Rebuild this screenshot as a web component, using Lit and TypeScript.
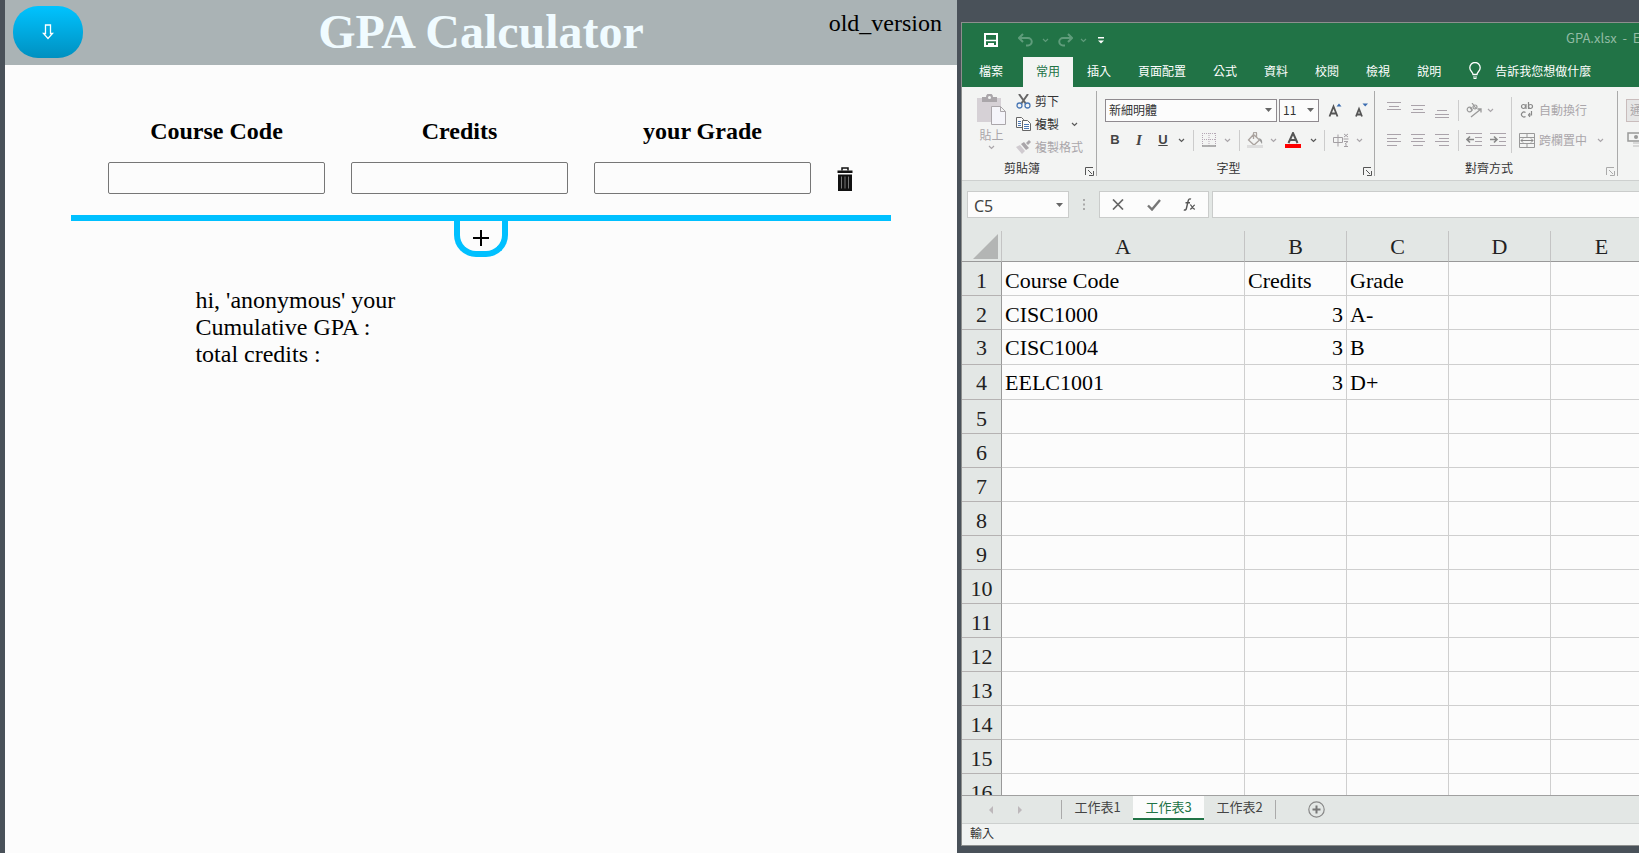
import { LitElement, html, svg, css, nothing, TemplateResult } from "lit";
import { customElement, state } from "lit/decorators.js";

/* ---------- shared icon helpers ---------- */

const icon = (w: number, h: number, body: TemplateResult) =>
  html`<svg width=${w} height=${h} viewBox="0 0 ${w} ${h}" fill="none" aria-hidden="true">${body}</svg>`;

const caret = (color = "#5a5a5a") =>
  icon(7, 5, svg`<path d="M1 1l2.5 2.5L6 1" stroke=${color} stroke-width="1.2"/>`);

const solidCaret = () => icon(7, 4, svg`<path d="M0 0h7L3.5 4z" fill="#666"/>`);

const lines = (ys: number[], xs: [number, number][], color = "#aaa3aa") =>
  icon(
    16,
    16,
    svg`<path d=${ys.map((y, i) => `M${xs[i][0]} ${y}.5H${xs[i][1]}`).join("")} stroke=${color}/>`
  );

const launcher = (color = "#555") =>
  icon(9, 9, svg`<path d="M8 .5H.5V8M3 3l4 4M8.500 4v4.500H4" stroke=${color}/>`);

/* ---------- GPA calculator page ---------- */

@customElement("gpa-calculator")
export class GpaCalculator extends LitElement {
  @state() private rows = 1;

  static styles = css`
    :host {
      display: block;
      background: #fcfcfc;
      color: #000;
      font: 24px/27px "Liberation Serif", serif;
      overflow: hidden;
    }
    .top {
      display: grid;
      grid-template-columns: 1fr auto 1fr;
      height: 65px;
      box-sizing: border-box;
      padding: 6px 8px 0;
      background: #aab3b5;
    }
    .download {
      width: 70px;
      height: 52px;
      border: 0;
      border-radius: 25px;
      padding: 0;
      color: #fff;
      background: linear-gradient(#00c3ff, #0090c0);
      display: grid;
      place-items: center;
    }
    h1 {
      margin: 0;
      font-size: 48px;
      line-height: 52px;
      color: #f0fbff;
    }
    .old {
      justify-self: end;
      align-self: start;
      margin: 4px 7px 0 0;
      color: #000;
      text-decoration: none;
    }
    .sheet {
      margin: 53px 66px 0;
    }
    .grid {
      display: grid;
      grid-template-columns: 1fr 1fr 1fr 16px;
      column-gap: 26px;
      row-gap: 17px;
      padding: 0 38px 21px 37px;
      align-items: center;
      border-bottom: 6px solid #00c0ff;
    }
    .grid label {
      text-align: center;
      font-weight: bold;
    }
    .grid input {
      box-sizing: border-box;
      width: 100%;
      min-width: 0;
      height: 32px;
      border: 1px solid #767676;
      border-radius: 2px;
      background: #fcfcfc;
      font: inherit;
    }
    .trash {
      border: 0;
      padding: 2px 0 0;
      background: none;
      display: flex;
    }
    .add {
      display: grid;
      place-items: center;
      margin: 0 auto;
      box-sizing: border-box;
      width: 54px;
      height: 36px;
      padding: 4px 0 0;
      border: 6px solid #00c0ff;
      border-top: 0;
      border-radius: 0 0 22px 22px;
      background: none;
    }
    .result {
      margin: 30px 0 0 20%;
      width: 220px;
    }
    .result p {
      margin: 0;
    }
  `;

  private trash() {
    return icon(
      16,
      24,
      svg`<path d="M5 3.500V1h6v2.500" stroke="#111" stroke-width="1.500"/>
        <path d="M.5 3.500h15V6H.5zM1 7.500h14V24H1z" fill="#111"/>
        <path d="M4.500 9.500v12M8 9.500v12M11.500 9.500v12" stroke="#777"/>`
    );
  }

  render() {
    const names = ["Course Code", "Credits", "your Grade"];
    return html`
      <header class="top">
        <button class="download" aria-label="Download">
          ${icon(12, 16, svg`<path d="M3.500 1h5v8.500h2L6 14.500 1.500 9.500h2z" stroke="#fff" stroke-width="1.300"/>`)}
        </button>
        <h1>GPA Calculator</h1>
        <a class="old" href="#old">old_version</a>
      </header>
      <main>
        <section class="sheet">
          <div class="grid">
            ${names.map((n, i) => html`<label for="f0-${i}">${n}</label>`)}
            <span></span>
            ${Array.from({ length: this.rows }).map(
              (_, r) => html`
                ${names.map((n, i) => html`<input id="f${r}-${i}" type="text" />`)}
                <button class="trash" aria-label="Delete row" @click=${() => (this.rows = Math.max(1, this.rows - 1))}>
                  ${this.trash()}
                </button>
              `
            )}
          </div>
          <button class="add" aria-label="Add row" @click=${() => this.rows++}>
            ${icon(16, 16, svg`<path d="M0 8h16M8 0v16" stroke="#000" stroke-width="2"/>`)}
          </button>
        </section>
        <section class="result">
          <p>hi, 'anonymous' your</p>
          <p>Cumulative GPA :</p>
          <p>total credits :</p>
        </section>
      </main>
    `;
  }
}

/* ---------- spreadsheet window ---------- */

const CELLS: Record<number, [string, string, string]> = {
  1: ["Course Code", "Credits", "Grade"],
  2: ["CISC1000", "3", "A-"],
  3: ["CISC1004", "3", "B"],
  4: ["EELC1001", "3", "D+"],
};

@customElement("sheet-window")
export class SheetWindow extends LitElement {
  static styles = css`
    :host {
      display: flex;
      flex-direction: column;
      box-sizing: border-box;
      border: 1px solid #8d8f8e;
      border-right: 0;
      background: #e3e7e5;
      color: #333;
      font: 12px/16px "Noto Sans CJK TC", sans-serif;
      overflow: hidden;
      min-width: 0;
    }
    button {
      border: 0;
      padding: 0;
      margin: 0;
      background: none;
      color: inherit;
      font: inherit;
      display: flex;
      align-items: center;
      justify-content: center;
      flex: none;
    }
    svg {
      display: block;
      flex: none;
    }
    .head {
      flex: none;
      background: #217346;
      color: #fff;
    }
    .title {
      display: flex;
      align-items: center;
      height: 34px;
      padding-left: 17px;
      box-sizing: border-box;
    }
    .book {
      margin-left: auto;
      width: 73px;
      overflow: hidden;
      white-space: pre;
      color: #92bba4;
      font-size: 13px;
      margin-top: -4px;
    }
    .w8 { width: 8px; }
    .w12 { width: 12px; }
    .w16 { width: 16px; }
    .w20 { width: 20px; }
    .w24 { width: 24px; }
    .w28 { width: 28px; }
    .tabs {
      display: flex;
      gap: 1px;
      height: 30px;
    }
    .tabs button {
      padding: 0 13px 3px;
      white-space: nowrap;
    }
    .tabs .file {
      padding-left: 17px;
      margin-right: 6px;
    }
    .tabs .on {
      background: #f3f4f3;
      color: #217346;
    }
    .tabs .ask {
      padding-left: 14px;
      gap: 14px;
    }
    .ribbon {
      display: flex;
      flex: none;
      height: 94px;
      box-sizing: border-box;
      padding: 4px 0;
      background: #f3f4f3;
      border-bottom: 1px solid #cdd0cf;
      overflow: hidden;
    }
    .group {
      display: grid;
      grid-template-rows: 1fr 16px;
      box-sizing: border-box;
      flex: none;
      border-right: 1px solid #aaa;
    }
    .clip { width: 135px; }
    .font { width: 278px; }
    .align { width: 243px; }
    .num { border: 0; width: 96px; }
    .foot {
      display: grid;
      grid-template-columns: 1fr 14px;
      align-items: center;
      text-align: center;
    }
    .foot button { align-self: end; }
    .dim { color: #aaa6aa; }
    .cliprow {
      display: flex;
      gap: 10px;
      padding-left: 15px;
    }
    .paste {
      flex-direction: column;
      justify-content: flex-start;
      gap: 2px;
      padding-top: 3px;
    }
    .list {
      display: grid;
      grid-template-rows: 20px 26px 20px;
    }
    .list button {
      gap: 4px;
      justify-content: flex-start;
    }
    .list .more { padding-left: 8px; }
    .rows {
      display: grid;
      grid-template-rows: 24px 24px;
      row-gap: 6px;
      align-content: start;
      padding-top: 7px;
    }
    .row {
      display: flex;
      align-items: center;
    }
    .row button { height: 24px; }
    .combos {
      padding-left: 8px;
      gap: 2px;
    }
    .combo {
      display: grid;
      align-items: center;
      box-sizing: border-box;
      height: 23px;
      border: 1px solid #8f8a8f;
      background: #fcfcfc;
    }
    .combo > * { grid-area: 1 / 1; }
    .combo svg {
      justify-self: end;
      margin-right: 4px;
      pointer-events: none;
    }
    .face { width: 172px; }
    .size { width: 40px; }
    select {
      appearance: none;
      border: 0;
      width: 100%;
      height: 21px;
      padding: 0 3px;
      background: none;
      color: #333;
      font: inherit;
    }
    .glyph {
      font: bold 13px/18px "Liberation Sans", sans-serif;
      color: #444;
    }
    .ital { font-style: italic; font-family: "Liberation Serif", serif; font-size: 15px; }
    .under { text-decoration: underline; }
    .fmt { padding-left: 6px; }
    .sep {
      width: 1px;
      height: 21px;
      background: #ccc;
    }
    .sepbox {
      display: flex;
      justify-content: center;
    }
    .w10 { width: 10px; }
    .alignbody {
      display: grid;
      grid-template-columns: 129px 1px 1fr;
      padding-left: 7px;
    }
    .tall {
      width: 1px;
      height: 56px;
      margin-top: 6px;
      background: #ccc;
    }
    .wide button { gap: 4px; padding-left: 7px; }
    .wide .drop { padding-left: 10px; }
    .num .rows { padding-left: 8px; }
    .num .combo { width: 110px; background: #e6e6e6; border-color: #c9bcbc; }
    .num select { color: #aaa6aa; }
    .formula {
      display: flex;
      flex: none;
      height: 27px;
      margin: 10px 0 0 5px;
    }
    .box {
      box-sizing: border-box;
      display: flex;
      align-items: center;
      border: 1px solid #cacccb;
      background: #fcfcfc;
    }
    .box input {
      border: 0;
      background: none;
      min-width: 0;
      flex: 1;
      font: 16px/20px "Noto Sans", sans-serif;
      color: #444;
    }
    .name { width: 102px; padding-right: 5px; }
    .name input { padding: 2px 0 0 6px; }
    .dots { width: 30px; display: grid; place-items: center; }
    .ops { width: 110px; justify-content: space-between; padding: 0 12px; }
    .fx { flex: 1; margin-left: 3px; border-right: 0; }
    .view {
      flex: 1;
      min-height: 0;
      overflow: hidden;
      margin-top: 13px;
    }
    table {
      table-layout: fixed;
      width: 691px;
      border-collapse: separate;
      border-spacing: 0;
      color: #000;
      font: 22px/24px "Liberation Serif", serif;
    }
    .cr { width: 40px; }
    .ca { width: 243px; }
    .cn { width: 102px; }
    th, td {
      box-sizing: border-box;
      height: 34px;
      padding: 0 3px 2px;
      vertical-align: bottom;
      border-right: 1px solid #cfcfcf;
      border-bottom: 1px solid #cfcfcf;
      background: #fcfcfc;
      font-weight: normal;
      white-space: nowrap;
    }
    .tallrow td, .tallrow th { height: 35px; padding-bottom: 4px; }
    th {
      background: #e3e7e5;
      border-color: #b5b2b2;
      color: #222;
    }
    thead th {
      height: 31px;
      border-bottom-color: #999;
      border-right-color: #c4c4c4;
    }
    tbody th { border-right-color: #999; }
    .corner svg { margin: 0 0 0 auto; }
    .n { text-align: right; }
    .sheets {
      display: flex;
      flex: none;
      align-items: stretch;
      height: 28px;
      box-sizing: border-box;
      border-top: 1px solid #a0a0a0;
      color: #444;
      font-size: 13px;
    }
    .nav { width: 99px; display: flex; gap: 24px; padding-left: 27px; box-sizing: border-box; }
    .sheets .tab { width: 71px; padding-bottom: 5px; }
    .sheets .on {
      background: #fcfcfc;
      color: #217346;
      border-bottom: 2px solid #217346;
      margin-bottom: 3px;
      padding: 0;
    }
    .bar { width: 1px; background: #aaa; margin: 4px 0; }
    .plus { margin-left: 32px; }
    .status {
      flex: none;
      height: 22px;
      box-sizing: border-box;
      border-top: 1px solid #cdd0cf;
      background: #f1f3f2;
      padding: 1px 8px;
    }
  `;

  private sep(cls: string) {
    return html`<span class="sepbox ${cls}"><span class="sep"></span></span>`;
  }

  private drop(cls: string, color = "#5a5a5a") {
    return html`<button class=${cls} aria-label="More">${caret(color)}</button>`;
  }

  private head() {
    const faded = "#5f9c7b";
    return html`
      <div class="head">
        <div class="title">
          <button class="w24" aria-label="Save">
            ${icon(14, 14, svg`<path d="M1 1h12v12H1z" stroke="#fff" stroke-width="2"/><path d="M1 7.500h12" stroke="#fff" stroke-width="1.500"/><path d="M4 10h6v4H8v-2H6v2H4z" fill="#fff"/>`)}
          </button>
          <span class="w12"></span>
          <button class="w20" aria-label="Undo">
            ${icon(15, 14, svg`<path d="M5 1L1 5l4 4M1.500 5H10a3.500 3.500 0 010 7.500H8" stroke=${faded} stroke-width="2"/>`)}
          </button>
          ${this.drop("w20", faded)}
          <button class="w20" aria-label="Redo">
            ${icon(15, 14, svg`<path d="M10 1l4 4-4 4M13.500 5H5a3.500 3.500 0 000 7.500h2" stroke=${faded} stroke-width="2"/>`)}
          </button>
          ${this.drop("w16", faded)}
          <button class="w20" aria-label="Customize">
            ${icon(6, 7, svg`<path d="M0 .75h6" stroke="#fff" stroke-width="1.500"/><path d="M0 3.500h6l-3 3z" fill="#fff"/>`)}
          </button>
          <span class="book">GPA.xlsx  -  Excel</span>
        </div>
        <nav class="tabs">
          <button class="file">檔案</button>
          <button class="on">常用</button>
          ${["插入", "頁面配置", "公式", "資料", "校閱", "檢視", "說明"].map((t) => html`<button>${t}</button>`)}
          <button class="ask">
            ${icon(12, 17, svg`<path d="M4 12.500c0-2.500-3.200-3.200-3.200-6.800a5.200 5.200 0 0110.400 0c0 3.600-3.200 4.300-3.200 6.800z" stroke="#fff" stroke-width="1.300"/><path d="M4 15h4M4.500 16.500h3" stroke="#fff"/>`)}
            告訴我您想做什麼
          </button>
        </nav>
      </div>
    `;
  }

  private clipboard() {
    return html`
      <section class="group clip">
        <div class="cliprow">
          <button class="paste dim">
            ${icon(29, 31, svg`<path d="M0 4h24v24H0z" fill="#d6d1d6"/><path d="M5 3h4a3.500 3.500 0 017 0h4v5H5z" fill="#aaa6aa"/><circle cx="12.500" cy="3.500" r="1.500" fill="#f3f4f3"/><path d="M14.500 12.500h9l5 5v13h-14zM23.500 12.500v5h5" fill="#f5f5fa" stroke="#aaa6aa"/>`)}
            <span>貼上</span>${caret("#aaa6aa")}
          </button>
          <div class="list">
            <button>
              ${icon(15, 15, svg`<path d="M3 0l7 10M12 0L5 10" stroke="#666" stroke-width="2"/><circle cx="3.500" cy="11.500" r="2.500" stroke="#4a78b5" stroke-width="1.300"/><circle cx="11.500" cy="11.500" r="2.500" stroke="#4a78b5" stroke-width="1.300"/>`)}剪下
            </button>
            <button>
              ${icon(15, 14, svg`<path d="M.5.5h5l2 2v8h-7z" fill="#fcfcfc" stroke="#666"/><path d="M2 4.500h3M2 6.500h3M2 8.500h3" stroke="#4a78b5"/><path d="M6.500 3.500h5l3 3v7h-8z" fill="#fcfcfc" stroke="#666"/><path d="M8 7.500h5M8 9.500h5M8 11.500h5" stroke="#4a78b5"/>`)}複製<span class="more">${caret()}</span>
            </button>
            <button class="dim">
              ${icon(15, 14, svg`<path d="M10 3l3-3 2 2-3 3z" fill="#aaa6aa"/><path d="M5 4l3-2 5 6-3 2z" fill="#aaa6aa"/><path d="M4 5l5 6-3 3-6-7z" fill="#d0cbd0"/>`)}複製格式
            </button>
          </div>
        </div>
        <div class="foot"><span>剪貼簿</span><button aria-label="Clipboard options">${launcher()}</button></div>
      </section>
    `;
  }

  private fontGroup() {
    return html`
      <section class="group font">
        <div class="rows">
          <div class="row combos">
            <div class="combo face">
              <select aria-label="字型"><option>新細明體</option></select>${solidCaret()}
            </div>
            <div class="combo size">
              <select aria-label="字型大小"><option>11</option></select>${solidCaret()}
            </div>
            <button class="w28" aria-label="Increase font size">
              ${icon(14, 16, svg`<path d="M1.500 14.500L5.500 4.500l4 10M3 11.500h5" stroke="#555" stroke-width="1.800"/><path d="M8.500 4.500L11 1.500l2.500 3z" fill="#3b6cb0"/>`)}
            </button>
            <button class="w20" aria-label="Decrease font size">
              ${icon(14, 16, svg`<path d="M2 14.500L5 7l3 7.500M3 12.500h4" stroke="#555" stroke-width="1.800"/><path d="M8.500 1.500H14L11.200 4.500z" fill="#3b6cb0"/>`)}
            </button>
          </div>
          <div class="row fmt">
            <button class="w24 glyph">B</button>
            <button class="w24 glyph ital">I</button>
            <button class="w24 glyph under">U</button>
            ${this.drop("w12")} ${this.sep("w12")}
            <button class="w20" aria-label="Borders">
              ${icon(14, 14, svg`<path d="M.5 0v13M13.500 0v13M7 0v13M0 .5h14M0 6.500h14" stroke="#b5a8b5" stroke-dasharray="1 1"/><path d="M0 13h14" stroke="#999" stroke-width="1.500"/>`)}
            </button>
            ${this.drop("w16", "#aaa6aa")} ${this.sep("w8")}
            <button class="w24" aria-label="Fill colour">
              ${icon(16, 16, svg`<path d="M6.500 2.500l6 5.500-5.500 5L1.500 8zM6.500 7V1.500a1.500 1.500 0 013 0V5" stroke="#aaa39f" stroke-width="1.300"/><path d="M12 6c3 1 3.500 3 3 6l-2-3z" fill="#999"/><path d="M0 14.500h16" stroke="#ddd" stroke-width="3"/>`)}
            </button>
            ${this.drop("w12", "#aaa6aa")}
            <button class="w28" aria-label="Font colour">
              ${icon(16, 16, svg`<path d="M3.500 11L8 1l4.500 10M5 8h6" stroke="#555" stroke-width="2"/><path d="M0 12h16v4H0z" fill="#f00"/>`)}
            </button>
            ${this.drop("w12")} ${this.sep("w10")}
            <button class="w24 dim" aria-label="Phonetic">
              ${icon(16, 15, svg`<path d="M.5 4.500h9v5h-9zM5 1.500v12M11 1l4 3M15 1l-4 3M10.500 6h5M11 8.500h4l-3 2.500M11 13.500h4M13 11v2" stroke="#a39fa3"/>`)}
            </button>
            ${this.drop("w12", "#aaa6aa")}
          </div>
        </div>
        <div class="foot"><span>字型</span><button aria-label="Font options">${launcher()}</button></div>
      </section>
    `;
  }

  private alignGroup() {
    const full: [number, number] = [1, 15];
    const mid: [number, number] = [3, 13];
    const indent = (d: string) =>
      icon(16, 14, svg`<path d="M0 .5h16M9 4.500h7M9 8.500h7M0 12.500h16" stroke="#aaa3aa"/><path d=${d} stroke="#888" stroke-width="1.600"/>`);
    return html`
      <section class="group align">
        <div class="alignbody">
          <div class="rows">
            <div class="row">
              <button class="w24" aria-label="Top">${lines([0, 4, 7], [full, mid, full])}</button>
              <button class="w24" aria-label="Middle">${lines([3, 7, 10], [full, mid, full])}</button>
              <button class="w24" aria-label="Bottom">${lines([8, 12, 15], [mid, full, full])}</button>
              ${this.sep("w8")}
              <button class="w24" aria-label="Orientation">
                ${icon(16, 15, svg`<circle cx="3.500" cy="6.500" r="2.300" stroke="#999" stroke-width="1.200"/><path d="M4 4.500l2.500 3M6 0l4 5.500" stroke="#999" stroke-width="1.200"/><circle cx="9" cy="4" r="2" stroke="#999" stroke-width="1.200"/><path d="M5 14L15 6M15 9.500V6h-3.500" stroke="#999" stroke-width="1.300"/>`)}
              </button>
              ${this.drop("w8", "#aaa6aa")}
            </div>
            <div class="row">
              <button class="w24" aria-label="Left">${lines([2, 6, 9, 13], [full, [1, 11], full, [1, 11]])}</button>
              <button class="w24" aria-label="Centre">${lines([2, 6, 9, 13], [full, mid, full, mid])}</button>
              <button class="w24" aria-label="Right">${lines([2, 6, 9, 13], [full, [5, 15], full, [5, 15]])}</button>
              ${this.sep("w8")}
              <button class="w24" aria-label="Decrease indent">${indent("M8 6.500H1M4 3.500l-3 3 3 3")}</button>
              <button class="w24" aria-label="Increase indent">${indent("M0 6.500h7M4 3.500l3 3-3 3")}</button>
            </div>
          </div>
          <span class="tall"></span>
          <div class="rows wide dim">
            <div class="row">
              <button>
                ${icon(16, 16, svg`<circle cx="4.500" cy="4.500" r="2" stroke="#888" stroke-width="1.200"/><path d="M7 2v5M9.500 0v7" stroke="#888" stroke-width="1.200"/><circle cx="11.500" cy="4.500" r="2" stroke="#888" stroke-width="1.200"/><path d="M6.500 10.500a2.500 2.500 0 100 4M12.500 9v4H9.500M11 11l-1.500 2 1.500 2" stroke="#888" stroke-width="1.200"/>`)}自動換行
              </button>
            </div>
            <div class="row">
              <button>
                ${icon(16, 15, svg`<path d="M.5.5h15v14H.5zM.5 4.500h15M.5 10.500h15M8 .5v4M8 10.500v4" stroke="#999"/><path d="M2 7.500h12M4 5.500l-2 2 2 2M12 5.500l2 2-2 2" stroke="#888"/>`)}跨欄置中
              </button>
              ${this.drop("drop", "#aaa6aa")}
            </div>
          </div>
        </div>
        <div class="foot"><span>對齊方式</span><button aria-label="Alignment options">${launcher("#aaa")}</button></div>
      </section>
    `;
  }

  private numberGroup() {
    return html`
      <section class="group num">
        <div class="rows">
          <div class="row">
            <div class="combo"><select aria-label="數值格式"><option>通用格式</option></select></div>
          </div>
          <div class="row">
            <button aria-label="Accounting format">
              ${icon(20, 16, svg`<path d="M2 1h17v8H2z" stroke="#999" stroke-width="1.500"/><circle cx="10" cy="5" r="2" fill="#999"/><path d="M7 11h9M7 14h9" stroke="#bbb"/>`)}
            </button>
          </div>
        </div>
      </section>
    `;
  }

  private formulaBar() {
    return html`
      <div class="formula">
        <div class="box name"><input aria-label="Name box" value="C5" />${solidCaret()}</div>
        <div class="dots">${icon(2, 11, svg`<path d="M1 0v11" stroke="#aaa" stroke-width="2" stroke-dasharray="2 2.500"/>`)}</div>
        <div class="box ops">
          <button aria-label="Cancel">${icon(12, 11, svg`<path d="M1 .5l10 10M11 .5l-10 10" stroke="#666" stroke-width="1.700"/>`)}</button>
          <button aria-label="Enter">${icon(14, 12, svg`<path d="M1 6.500l4 4L13 1" stroke="#777" stroke-width="2.400"/>`)}</button>
          <button aria-label="Insert function">
            ${icon(13, 13, svg`<path d="M8 1.200C6.200.3 5.500 1.300 5 3.500L3.500 10c-.4 1.800-1.200 2.500-2.700 1.800M2.500 4.800H7" stroke="#555" stroke-width="1.400"/><path d="M7 7c2-.5 2 4.500 5 4M12 7c-2 0-3 4.500-5 4" stroke="#555" stroke-width="1.200"/>`)}
          </button>
        </div>
        <div class="box fx"><input aria-label="Formula" /></div>
      </div>
    `;
  }

  private grid() {
    return html`
      <div class="view">
        <table>
          <colgroup>
            <col class="cr" /><col class="ca" /><col class="cn" /><col class="cn" /><col class="cn" /><col class="cn" />
          </colgroup>
          <thead>
            <tr>
              <th class="corner" aria-label="Select all">${icon(25, 25, svg`<path d="M25 0v25H0z" fill="#b3b5b4"/>`)}</th>
              ${["A", "B", "C", "D", "E"].map((c) => html`<th scope="col">${c}</th>`)}
            </tr>
          </thead>
          <tbody>
            ${Array.from({ length: 16 }, (_, i) => i + 1).map((n) => {
              const c = CELLS[n];
              return html`<tr class=${n === 3 || n === 4 ? "tallrow" : ""}>
                <th scope="row">${n}</th>
                <td>${c ? c[0] : nothing}</td>
                <td class=${n > 1 ? "n" : ""}>${c ? c[1] : nothing}</td>
                <td>${c ? c[2] : nothing}</td>
                <td></td>
                <td></td>
              </tr>`;
            })}
          </tbody>
        </table>
      </div>
    `;
  }

  render() {
    return html`
      ${this.head()}
      <div class="ribbon">${this.clipboard()}${this.fontGroup()}${this.alignGroup()}${this.numberGroup()}</div>
      ${this.formulaBar()} ${this.grid()}
      <div class="sheets">
        <div class="nav">
          <button aria-label="Previous sheet">${icon(5, 8, svg`<path d="M4 0v8L0 4z" fill="#bdb8bb"/>`)}</button>
          <button aria-label="Next sheet">${icon(5, 8, svg`<path d="M0 0v8l4-4z" fill="#bdb8bb"/>`)}</button>
        </div>
        <span class="bar"></span>
        <button class="tab">工作表1</button>
        <button class="tab on">工作表3</button>
        <button class="tab">工作表2</button>
        <span class="bar"></span>
        <button class="plus" aria-label="New sheet">
          ${icon(17, 17, svg`<circle cx="8.500" cy="8.500" r="7.700" stroke="#888" stroke-width="1.200"/><path d="M8.500 4.500v8M4.500 8.500h8" stroke="#777" stroke-width="2"/>`)}
        </button>
      </div>
      <div class="status">輸入</div>
    `;
  }
}

/* ---------- desktop ---------- */

@customElement("app-root")
export class AppRoot extends LitElement {
  static styles = css`
    :host {
      display: grid;
      grid-template-columns: minmax(0, 952fr) minmax(0, 678fr);
      column-gap: 4px;
      box-sizing: border-box;
      height: 100vh;
      padding-left: 5px;
      background: #495159;
      overflow: hidden;
    }
    sheet-window {
      margin: 22px 0 7px;
    }
  `;

  render() {
    return html`<gpa-calculator></gpa-calculator><sheet-window></sheet-window>`;
  }
}
